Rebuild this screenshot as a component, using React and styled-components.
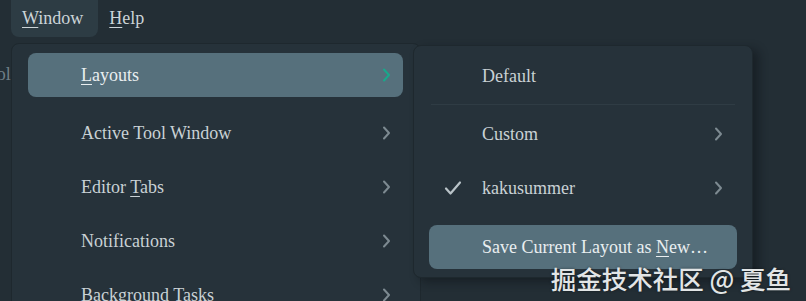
import React from 'react';
import styled, {createGlobalStyle, css} from 'styled-components';

const serif = css`
  font-family: "Liberation Serif", "Times New Roman", serif;
`

const GlobalStyle = createGlobalStyle`
  html, body {
    margin: 0;
    padding: 0;
    background: #232e35;
    overflow: hidden;
  }
`

const Page = styled.div`
  position: relative;
  width: 806px;
  height: 301px;
  overflow: hidden;
  background: #232e35;
  ${serif}
  font-size: 18px;
`

const MenuBar = styled.div`
  display: flex;
  align-items: stretch;
  height: 37px;
  padding-left: 11px;
`

const BarItem = styled.div`
  display: flex;
  align-items: center;
  padding: 0 ${props => props.open ? "15px" : "11px"} 0 11px;
  border-radius: 0 0 8px 8px;
  background: ${props => props.open ? "#2d3c44" : "transparent"};
  color: #ccd4d8;
  ${serif}
  font-size: 18px;
`

const Label = styled.span`
  ${serif}
  font-size: inherit;
`

const Mnemonic = styled.span`
  ${serif}
  text-decoration: underline;
  text-underline-offset: 3px;
  text-decoration-thickness: 1px;
`

const Workspace = styled.div`
  ${serif}
  padding-top: 27px;
  color: #6f7e86;
  font-size: 18px;
  margin-left: -22px;
`

const Menu = styled.div`
  position: absolute;
  top: ${props => props.top}px;
  left: ${props => props.left}px;
  width: ${props => props.width}px;
  height: ${props => props.height}px;
  box-sizing: border-box;
  padding: ${props => props.pad};
  background: #26323a;
  border: 1px solid #1e282e;
  border-radius: 8px;
  box-shadow: ${props => props.shadow ? "6px 4px 10px rgba(10, 16, 20, 0.45)" : "none"};
  display: flex;
  flex-direction: column;
`

const Item = styled.div`
  display: grid;
  grid-template-columns: 53px 1fr 20px;
  align-items: center;
  height: 44px;
  flex: none;
  margin-top: ${props => props.gap || 0}px;
  padding-right: ${props => props.right || 12}px;
  border-radius: 8px;
  background: ${props => props.active ? "#56707c" : "transparent"};
  color: ${props => props.active ? "#e9eef0" : "#c9d1d5"};
  ${serif}
  font-size: 18px;
  white-space: nowrap;
`

const Separator = styled.div`
  height: 1px;
  margin: 6px 2px 7px;
  background: #2f3c44;
  flex: none;
`

const Icon = styled.div`
  display: flex;
  justify-content: center;
  padding-right: 6px;
`

const Arrow = styled.div`
  display: flex;
  justify-content: flex-end;
`

const Watermark = styled.div`
  position: absolute;
  right: 15px;
  top: 259px;
  font-family: "Noto Sans CJK SC", "Noto Sans", sans-serif;
  font-size: 25.5px;
  font-weight: 500;
  color: #e2e5e6;
  text-shadow: 0 0 3px rgba(0, 0, 0, 0.45);
`

function Chevron({color}) {
  return (
    <svg width="9" height="14" viewBox="0 0 9 14">
      <path d="M2 1.5 L7 7 L2 12.5" fill="none" stroke={color} strokeWidth="2" strokeLinecap="round" strokeLinejoin="round" />
    </svg>
  );
}

function Check() {
  return (
    <svg width="18" height="16" viewBox="0 0 18 16">
      <path d="M2 8.5 L6.5 13.5 L16 2.5" fill="none" stroke="#b9c3c8" strokeWidth="2.2" strokeLinecap="round" strokeLinejoin="round" />
    </svg>
  );
}

function MenuItem({label, active, gap, right, icon, sub, arrowColor}) {
  return (
    <Item active={active} gap={gap} right={right}>
      <Icon>{icon}</Icon>
      <Label>{label}</Label>
      <Arrow>{sub && <Chevron color={arrowColor || "#7d8a91"} />}</Arrow>
    </Item>
  );
}

export default function App() {
  return (
    <>
      <GlobalStyle />
      <Page>
        <MenuBar>
          <BarItem open><Label><Mnemonic>W</Mnemonic>indow</Label></BarItem>
          <BarItem><Label><Mnemonic>H</Mnemonic>elp</Label></BarItem>
        </MenuBar>
        <Workspace>Tool</Workspace>

        <Menu top={43} left={11} width={410} height={300} pad="9px 17px 0 16px">
          <MenuItem label={<><Mnemonic>L</Mnemonic>ayouts</>} active sub arrowColor="#19a88b" />
          <MenuItem label="Active Tool Window" sub gap={14} />
          <MenuItem label={<>Editor <Mnemonic>T</Mnemonic>abs</>} sub gap={10} />
          <MenuItem label="Notifications" sub gap={10} />
          <MenuItem label="Background Tasks" sub gap={10} />
        </Menu>

        <Menu top={45} left={413} width={340} height={233} pad="8px 15px 0 15px" shadow>
          <MenuItem label="Default" right={14} />
          <Separator />
          <MenuItem label="Custom" sub right={14} />
          <MenuItem label="kakusummer" icon={<Check />} sub right={14} gap={10} />
          <MenuItem label={<>Save Current Layout as <Mnemonic>N</Mnemonic>ew…</>} active right={14} gap={15} />
        </Menu>

        <Watermark>掘金技术社区 @ 夏鱼</Watermark>
      </Page>
    </>
  );
}
